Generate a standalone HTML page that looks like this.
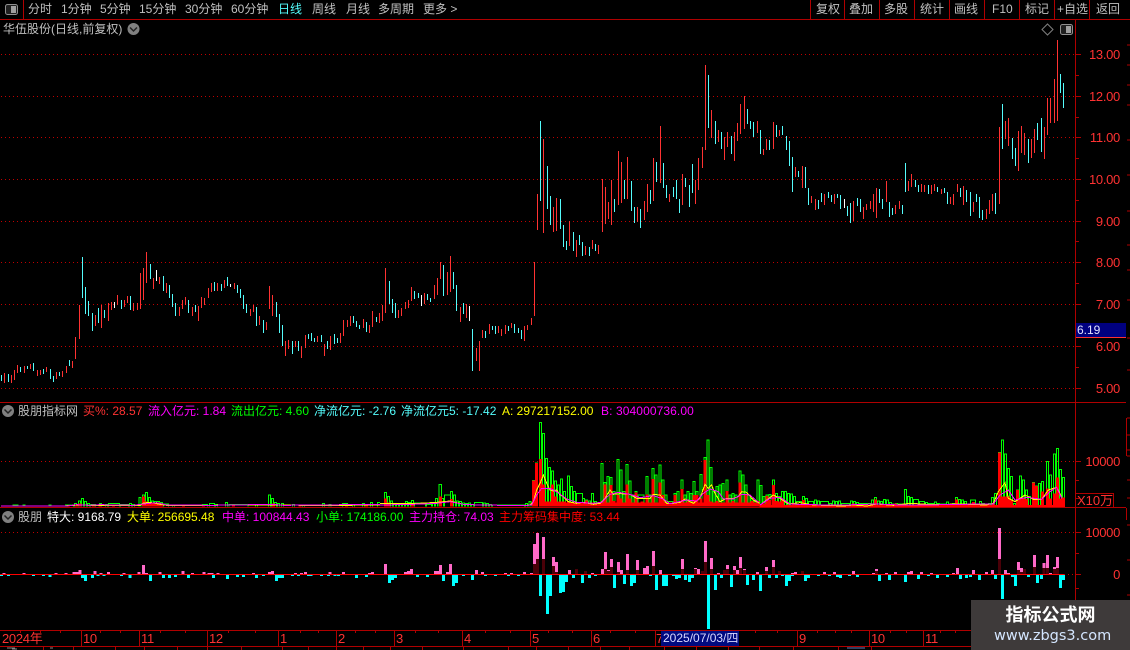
<!DOCTYPE html>
<html><head><meta charset="utf-8"><style>
html,body{margin:0;padding:0;background:#000}
#p{position:relative;width:1130px;height:650px;overflow:hidden;background:#000;font:12px/14px "Liberation Sans","WenQuanYi Zen Hei","Noto Sans CJK SC",sans-serif;color:#c0c0c0}
svg{position:absolute;left:0;top:0}
.t{position:absolute;white-space:nowrap}
.top{top:2px}.l1{top:404px}.l2{top:510px}
.pr{position:absolute;right:10px;color:#ff3232;font-size:13px;letter-spacing:-.3px;white-space:nowrap}
.ax{position:absolute;top:632px;color:#ff3232;font-size:13px;letter-spacing:-.3px}
.r{color:#ff3232}.m{color:#ff00ff}.g{color:#00ff00}.c{color:#54fcfc}.y{color:#ffff00}.w{color:#fff}
</style></head><body><div id="p">
<svg width="1130" height="650" viewBox="0 0 1130 650" shape-rendering="crispEdges" fill="none">
<!-- grid -->
<path stroke="#c00000" stroke-dasharray="1 3" d="M1 54.5H1075M1 96.5H1075M1 137.5H1075M1 179.5H1075M1 221.5H1075M1 262.5H1075M1 304.5H1075M1 346.5H1075M1 388.5H1075M1 461.5H1075M1 532.5H1075M1060 574.5H1075"/>
<!-- candles 0-300 -->
<g transform="translate(0 240) scale(.33333)" stroke-width="3">
<path stroke="#ff3232" d="M13 399V429M34 405V429M43 390V420M52 375V399M73 378V399M91 372V387M112 390V408M121 390V405M139 381V396M169 396V417M187 393V411M199 378V399M217 363V384M226 291V357M238 195V297M286 225V258M304 195V264M325 189V243M334 186V210M352 165V195M373 180V201M382 168V189M400 189V213M412 189V210M421 99V207M430 84V180M439 36V129M460 114V147M478 111V132M499 129V159M538 201V228M547 180V207M556 171V195M577 201V228M595 198V243M604 171V204M613 174V195M625 144V174M634 129V156M652 129V153M673 120V144M703 129V147M751 207V228M760 195V216M778 228V255M799 246V270M808 138V207M817 165V228M856 303V348M865 300V327M886 303V321"/>
<path stroke="#54fcfc" d="M4 405V423M25 402V426M61 381V396M82 378V387M100 369V393M130 387V402M151 387V417M160 408V426M178 396V408M208 360V378M247 51V174M256 141V222M265 183V228M277 219V273M295 204V249M313 210V234M364 180V207M391 168V210M451 72V117M490 108V153M508 135V174M517 162V201M526 189V228M565 180V219M586 195V216M643 126V153M664 132V153M682 111V138M712 135V159M721 147V174M730 165V207M739 192V219M769 201V258M790 240V279M829 186V231M838 222V279M847 255V318M877 303V342M895 303V333"/>
<path stroke="#fff" d="M343 186V204M469 90V123M691 132V141"/>
</g>
<!-- candles 300-620 -->
<g transform="translate(300 100) scale(.33333)" stroke-width="3">
<path stroke="#ff3232" d="M4 738V774M16 705V744M52 708V726M73 732V768M91 708V750M121 699V729M130 660V708M142 660V681M151 648V678M190 657V684M208 675V699M217 633V681M238 639V669M247 615V663M256 504V639M295 630V654M304 624V648M316 606V627M325 600V624M334 561V603M373 579V612M403 555V597M412 534V585M421 486V537M442 516V585M451 468V576M481 621V666M499 612V654M529 744V783M538 723V813M547 690V714M568 672V702M595 678V699M604 687V708M616 675V702M634 669V684M673 678V723M682 675V690M694 654V675M703 486V648M712 282V390M730 117V399M760 321V396M769 294V393M808 363V438M829 420V471M856 438V465M877 420V447M895 435V462M907 237V396M916 261V372M925 306V357M934 240V375M955 153V315"/>
<path stroke="#54fcfc" d="M25 702V717M34 699V723M43 714V726M64 705V726M82 723V747M103 702V732M112 714V729M160 648V669M169 663V681M178 675V687M199 666V696M229 651V666M268 543V612M277 597V639M286 609V654M343 573V597M355 579V594M382 582V600M391 594V606M430 495V588M460 516V567M469 555V633M490 609V642M517 687V813M556 693V714M577 678V690M586 678V702M625 678V693M643 672V699M655 684V699M664 690V717M721 63V303M742 198V327M751 288V375M781 297V387M790 375V441M799 423V450M820 396V453M838 405V435M847 426V468M868 441V468M886 432V453M943 297V336"/>
<path stroke="#fff" d="M364 585V618M508 618V663"/>
</g>
<!-- candles 620-870 -->
<g transform="translate(620 60) scale(.33333)" stroke-width="3">
<path stroke="#ff3232" d="M4 306V429M22 291V417M52 441V486M73 423V480M82 372V456M100 294V423M121 198V369M148 402V426M187 342V435M226 360V432M235 294V390M247 261V324M256 15V270M274 150V234M295 210V246M313 231V300M322 216V261M343 216V303M352 189V243M361 132V222M373 108V207M412 183V219M430 267V285M439 237V270M460 186V267M478 210V228M526 321V351M547 318V384M574 408V429M586 417V450M613 402V435M643 402V432M700 423V483M730 441V477M739 432V450"/>
<path stroke="#54fcfc" d="M13 360V417M34 363V453M43 441V489M61 447V504M91 390V432M109 306V366M130 309V384M139 375V414M160 381V411M169 360V417M178 417V459M196 354V381M208 375V441M217 312V399M265 45V204M286 183V252M304 216V267M334 228V282M382 147V192M391 183V207M400 186V231M421 210V282M448 240V270M469 195V231M487 198V225M499 228V270M508 243V318M517 291V396M535 333V351M556 321V384M565 384V435M595 420V447M604 399V426M625 396V414M634 405V426M652 402V414M661 405V447M682 438V468M691 429V489M712 414V438M721 417V456"/>
<path stroke="#fff" d="M673 417V444"/>
</g>
<!-- candles 870-1065 -->
<g transform="translate(870 30) scale(.33333)" stroke-width="3">
<path stroke="#ff3232" d="M1 513V537M10 492V546M19 474V564M49 453V516M76 525V552M88 513V537M115 453V483M124 432V471M154 462V486M163 465V486M184 465V492M193 462V483M214 477V492M241 501V522M250 492V525M262 462V486M280 468V525M310 516V546M349 537V567M358 510V552M367 492V543M388 291V522M406 273V327M415 264V348M445 303V423M454 288V369M463 309V375M484 327V384M493 297V369M523 291V387M532 204V315M541 204V279M553 147V279M562 30V273"/>
<path stroke="#54fcfc" d="M28 477V519M37 507V537M58 516V561M67 534V555M97 525V552M106 399V486M136 450V471M145 465V486M175 465V492M202 471V486M223 474V489M232 486V522M271 474V501M289 480V516M301 486V558M319 492V516M328 501V564M337 540V570M376 489V552M397 222V357M427 324V387M436 354V408M475 327V399M502 279V330M514 264V366M571 132V189M580 159V234"/>
</g>
<!-- volume panel left -->
<g transform="translate(0 395) scale(.33333)" stroke-width="3">
<path stroke="#00ff00" d="M39 334V330h15V334M69 334V330h6V334M147 334V330h6V334M197 334V330h24V334M223 334V325h6V334M235 334V318h6V334M244 334V310h6V334M253 334V320h6V334M262 334V325h6V334M271 334V328h15V334M298 334V325h6V334M316 334V328h6V334M325 334V325h33V334M361 334V328h24V334M388 334V325h6V334M397 334V328h6V334M417 334V308h6V334M427 334V300h6V334M436 334V292h6V334M445 334V308h6V334M454 334V318h6V334M463 334V320h15V334M481 334V322h6V334M490 334V327h15V334M517 334V330h6V334M607 334V328h15V334M628 334V325h15V334M646 334V328h6V334M677 334V322h6V334M687 334V328h57V334M767 334V328h6V334M805 334V300h6V334M814 334V310h6V334M823 334V322h6V334M832 334V325h6V334M845 334V325h6V334M877 334V328h6V334M907 334V330h6V334M967 334V325h6V334M987 334V328h6V334M1027 334V325h15V334M1057 334V328h6V334M1087 334V325h6V334M1112 334V322h6V334M1132 334V323h8"/>
<path stroke="#ff0000" stroke-width="9" d="M205 334V330M230 334V328M240 334V326M280 334V328M300 334V330M340 334V330M430 334V305M439 334V320M448 334V325M457 334V325M466 334V322M475 334V322M484 334V325M550 334V330M610 334V330M700 334V330M820 334V326M900 334V330M1040 334V328M1100 334V330"/>
<path stroke="#ffff00" d="M200 332L240 330L300 332L420 332L430 324L450 322L480 328L500 331L600 332L680 330L880 330L920 332L1140 330"/>
<path stroke="#ff00ff" d="M3 333L200 333L230 329L270 331L300 329L400 331L430 327L470 323L500 330L640 331L700 330L820 328L850 331L1140 328"/>
</g>
<!-- volume panel middle -->
<g transform="translate(380 395) scale(.33333)" stroke-width="3">
<path stroke="#00ff00" d="M13 334V292h6V334M22 334V305h6V334M31 334V318h6V334M40 334V325h6V334M49 334V328h6V334M58 334V325h6V334M67 334V328h6V334M76 334V320h6V334M85 334V322h6V334M94 334V316h6V334M103 334V324h33V334M139 334V328h15V334M157 334V326h6V334M166 334V310h6V334M177 334V268h7V334M184 334V310h6V334M193 334V300h18V334M211 334V290h6V334M220 334V300h6V334M229 334V318h6V334M238 334V320h6V334M247 334V324h6V334M256 334V326h6V334M265 334V324h6V334M274 334V328h6V334M283 334V322h24V334M310 334V324h6V334M319 334V326h6V334M328 334V328h6V334M337 334V330h96V334M437 334V325h6V334M447 334V320h6V334M457 334V256h6V334M466 334V204h6V334M478 334V82h6V334M487 334V115h6V334M496 334V190h6V334M505 334V218h6V334M514 334V228h6V334M523 334V258h6V334M532 334V270h6V334M541 334V252h6V334M550 334V290h6V334M562 334V243h6V334M571 334V275h6V334M580 334V290h6V334M589 334V295h18V334M607 334V310h6V334M616 334V315h6V334M625 334V318h6V334M634 334V295h6V334M643 334V320h6V334M652 334V322h6V334M663 334V205h6V334M672 334V262h6V334M681 334V245h6V334M690 334V248h6V334M699 334V290h6V334M711 334V193h6V334M720 334V225h6V334M729 334V290h6V334M738 334V208h6V334M747 334V258h6V334M756 334V300h6V334M765 334V290h6V334M774 334V300h18V334M798 334V245h6V334M807 334V300h6V334M816 334V220h6V334M825 334V240h6V334M837 334V210h6V334M846 334V255h6V334M855 334V300h6V334M864 334V320h15V334M882 334V295h6V334M891 334V290h6V334M903 334V255h6V334M912 334V300h6V334M921 334V290h6V334M930 334V295h6V334M939 334V260h6V334M948 334V290h6V334M960 334V238h6V334M972 334V187h6V334M981 334V135h6V334M990 334V217h6V334M999 334V290h6V334M1008 334V275h6V334M1017 334V270h6V334M1026 334V265h6V334M1038 334V255h6V334M1047 334V300h6V334M1056 334V295h6V334M1065 334V300h6V334M1077 334V228h6V334M1086 334V240h6V334M1095 334V270h6V334M1104 334V300h6V334M1113 334V310h6V334M1122 334V320h6V334M1131 334V255h6V334"/>
<path stroke="#ff0000" stroke-width="9" d="M16 334V310M25 334V322M97 334V326M181 334V305M214 334V312M460 334V256M469 334V204M481 334V192M490 334V268M499 334V320M508 334V320M517 334V268M526 334V305M535 334V320M544 334V320M553 334V320M565 334V320M583 334V322M601 334V322M619 334V316M637 334V322M666 334V322M675 334V268M693 334V270M702 334V318M714 334V300M723 334V310M741 334V268M750 334V310M768 334V292M786 334V320M801 334V298M819 334V252M840 334V262M849 334V300M867 334V322M885 334V300M906 334V282M924 334V320M942 334V300M951 334V300M963 334V310M975 334V195M984 334V300M993 334V320M1011 334V318M1041 334V288M1059 334V318M1080 334V262M1098 334V300M1116 334V318M1134 334V318"/>
<path fill="#ff0000" stroke="none" d="M495 323H1140V334H495Z"/>
<path stroke="#ffff00" d="M0 326L100 326L170 322L210 318L250 328L300 330L430 332L450 330L460 320L470 285L480 265L490 240L500 265L510 285L520 288L530 285L540 300L550 305L565 320L590 325L610 322L640 328L660 325L675 310L690 285L700 298L720 296L750 298L770 310L790 310L810 310L820 298L840 300L860 325L880 325L900 322L915 312L940 325L960 310L975 268L985 280L995 270L1005 295L1020 320L1040 310L1060 310L1075 305L1085 290L1100 292L1120 315L1140 325"/>
<path stroke="#ff00ff" d="M0 330L100 328L170 325L210 320L250 328L300 330L430 332L455 330L470 300L485 280L510 280L530 290L560 312L590 322L640 325L665 322L690 298L715 292L750 298L780 308L820 302L850 312L870 326L920 315L950 318L970 295L990 282L1015 290L1030 312L1060 312L1085 298L1110 300L1135 322"/>
</g>
<!-- volume panel right -->
<g transform="translate(760 400) scale(.33333)" stroke-width="3">
<path stroke="#00ff00" d="M0 321V256h6V321M9 321V290h6V321M18 321V285h6V321M27 321V283h6V321M37 321V240h6V321M46 321V280h6V321M55 321V290h6V321M64 321V275h6V321M73 321V275h6V321M82 321V280h6V321M91 321V282h6V321M100 321V290h6V321M109 321V305h15V321M127 321V290h6V321M136 321V295h6V321M145 321V305h15V321M163 321V300h6V321M172 321V303h6V321M181 321V305h24V321M208 321V310h6V321M217 321V303h6V321M226 321V305h6V321M235 321V303h6V321M244 321V310h24V321M271 321V303h6V321M280 321V305h6V321M289 321V308h6V321M298 321V310h33V321M334 321V300h6V321M343 321V292h6V321M352 321V303h6V321M361 321V305h6V321M370 321V298h6V321M379 321V300h6V321M388 321V308h6V321M397 321V312h6V321M406 321V310h6V321M415 321V312h15V321M433 321V268h6V321M442 321V290h6V321M451 321V292h6V321M460 321V298h15V321M478 321V305h15V321M496 321V308h6V321M505 321V310h15V321M523 321V306h6V321M532 321V310h6V321M541 321V312h15V321M559 321V306h6V321M568 321V312h6V321M577 321V310h6V321M586 321V292h6V321M595 321V298h6V321M604 321V300h6V321M613 321V305h6V321M622 321V312h6V321M631 321V300h15V321M649 321V312h6V321M658 321V305h6V321M667 321V310h6V321M676 321V312h6V321M685 321V310h6V321M694 321V292h6V321M703 321V280h6V321M715 321V158h6V321M724 321V120h6V321M733 321V162h6V321M742 321V205h6V321M751 321V230h6V321M760 321V310h6V321M769 321V270h6V321M778 321V228h6V321M787 321V240h6V321M796 321V270h6V321M805 321V290h6V321M818 321V248h6V321M827 321V258h6V321M836 321V250h6V321M845 321V245h6V321M859 321V184h6V321M868 321V225h6V321M880 321V162h6V321M889 321V145h6V321M898 321V208h6V321M907 321V232h6V321"/>
<path stroke="#ff0000" stroke-width="9" d="M3 321V312M12 321V310M21 321V288M30 321V300M40 321V255M49 321V303M58 321V305M67 321V300M100 321V314M130 321V300M160 321V314M220 321V314M280 321V310M346 321V298M406 321V310M450 321V314M520 321V314M589 321V298M640 321V306M700 321V312M718 321V158M727 321V290M736 321V290M745 321V290M754 321V300M772 321V270M781 321V295M790 321V295M799 321V297M808 321V315M821 321V248M830 321V258M839 321V315M848 321V275M862 321V265M871 321V295M883 321V280M892 321V232M901 321V295M910 321V293"/>
<path fill="#ff0000" stroke="none" d="M0 315H915V321H0Z"/>
<path stroke="#ffff00" d="M0 315L20 300L40 285L60 295L85 312L120 308L160 315L250 318L280 315L320 318L350 312L400 316L450 310L520 314L600 312L680 315L700 310L715 275L735 248L745 295L765 305L795 285L820 298L845 298L865 270L890 262L905 290"/>
<path stroke="#ff00ff" d="M0 315L30 295L60 292L90 312L140 314L250 315L350 312L420 315L500 315L600 313L700 312L720 285L745 270L765 300L800 292L845 298L870 275L890 262L905 295"/>
</g>
<!-- bottom panel bars -->
<g transform="translate(0 510) scale(.33333)" stroke-width="9">
<path stroke="#ff69c8" d="M12 193V189M72 193V189M168 193V189M198 193V189M222 193V186M231 193V186M240 193V180M285 193V183M303 193V189M326 193V186M372 193V189M417 193V186M430 193V165M440 193V189M480 193V186M549 193V183M578 193V189M612 193V186M627 193V189M636 193V189M654 193V189M760 193V189M808 193V186M817 193V183M886 193V189M904 193V189M916 193V186M990 193V186M1030 193V186M1108 193V189M1117 193V186M1156 193V162M1216 193V186M1225 193V183M1234 193V177M1306 193V183M1315 193V183M1322 193V165M1342 193V186M1351 193V162M1429 193V180M1447 193V186"/>
<path stroke="#00ffff" d="M4 195V198M25 195V198M100 195V198M130 195V198M150 195V201M247 195V204M256 195V213M277 195V204M294 195V198M312 195V198M364 195V198M390 195V204M451 195V213M490 195V204M508 195V204M526 195V201M565 195V204M640 195V204M682 195V207M712 195V201M730 195V201M770 195V204M790 195V198M829 195V213M838 195V204M847 195V204M877 195V198M895 195V198M925 195V198M933 195V198M965 195V198M985 195V198M1005 195V198M1015 195V198M1069 195V204M1100 195V201M1168 195V219M1177 195V210M1186 195V204M1252 195V201M1282 195V201M1330 195V213M1360 195V228M1369 195V219M1390 195V198M1417 195V210M1456 195V198M1486 195V198"/>
</g>
<g transform="translate(500 510) scale(.33333)" stroke-width="9">
<path stroke="#ff69c8" d="M17 193V189M35 193V189M73 193V186M94 193V189M103 193V102M112 193V69M130 193V81M160 193V141M169 193V156M208 193V180M277 193V189M307 193V177M316 193V126M325 193V180M334 193V147M355 193V156M364 193V180M382 193V132M412 193V150M433 193V174M442 193V168M460 193V123M481 193V180M547 193V147M586 193V174M595 193V177M616 193V93M634 193V144M655 193V189M682 193V165M703 193V168M712 193V180M721 193V141M733 193V177M772 193V186M799 193V171M820 193V150M877 193V189M886 193V186"/>
<path stroke="#4a0008" d="M103 193V162M112 193V147M130 193V147M160 193V168M169 193V186M229 193V177M256 193V183M316 193V177M325 193V183M334 193V171M355 193V186M382 193V180M412 193V180M460 193V168M547 193V177M586 193V177M607 193V183M616 193V156M634 193V177M673 193V180M682 193V177M703 193V180M721 193V174M733 193V180M799 193V183M820 193V171M838 193V183M907 193V183"/>
<path stroke="#00ffff" d="M25 195V198M55 195V198M121 195V258M142 195V312M151 195V258M181 195V249M190 195V246M199 195V216M220 195V204M247 195V219M268 195V204M286 195V198M343 195V234M373 195V222M394 195V228M403 195V219M451 195V198M469 195V240M490 195V228M499 195V228M520 195V198M529 195V207M538 195V204M556 195V210M568 195V216M577 195V204M625 195V357M646 195V240M664 195V204M694 195V231M742 195V225M760 195V210M781 195V243M808 195V204M829 195V204M847 195V198M859 195V228M868 195V213M877 195V198M916 195V213M925 195V204M955 195V198"/>
</g>
<g transform="translate(820 510) scale(.33333)" stroke-width="9">
<path stroke="#ff69c8" d="M13 193V186M43 193V186M100 193V183M160 193V189M169 193V177M199 193V189M226 193V186M265 193V186M274 193V183M304 193V186M334 193V189M400 193V189M412 193V174M460 193V180M499 193V186M517 193V180M538 193V54M556 193V180M565 193V189M595 193V156M604 193V174M643 193V135M672 193V159M682 193V135M691 193V189M703 193V171M712 193V141"/>
<path stroke="#4a0008" d="M169 193V183M538 193V147M595 193V180M604 193V186M613 193V177M643 193V171M672 193V174M682 193V174M703 193V177M712 193V174"/>
<path stroke="#00ffff" d="M28 195V198M52 195V201M61 195V204M88 195V198M112 195V201M178 195V213M208 195V210M256 195V216M295 195V207M325 195V198M352 195V204M382 195V201M421 195V207M439 195V204M451 195V201M478 195V210M526 195V207M547 195V267M577 195V201M586 195V228M625 195V201M652 195V219M664 195V207M721 195V234M730 195V210"/>
</g>
<path stroke="#ff0000" d="M0 574.5H1064"/>
<!-- frame lines -->
<path stroke="#b00000" d="M0 19.5H1130M23.5 0V19M810.5 0V19M844.5 0V19M879.5 0V19M914.5 0V19M949.5 0V19M984.5 0V19M1019.5 0V19M1054.5 0V19M1089.5 0V19M0 402.5H1126M0 507.5H1126M0 630.5H1130M0 646.5H1130M1075.5 19V630M1126.5 508V520M1076 493.5H1113.5V507"/>
<!-- axis ticks -->
<path stroke="#b00000" d="M1076 54.5h5M1076 96.5h5M1076 137.5h5M1076 179.5h5M1076 221.5h5M1076 262.5h5M1076 304.5h5M1076 346.5h5M1076 388.5h5M1076 75.5h3M1076 117.5h3M1076 158.5h3M1076 200.5h3M1076 241.5h3M1076 283.5h3M1076 325.5h3M1076 367.5h3M1076 461.5h5M1076 480.5h3M1076 498.5h3M1076 532.5h5M1076 574.5h5M1076 553.5h3M1076 588.5h3"/>
<path stroke="#b00000" d="M1126.5 418V456M1127 45h3M1127 65h3M1127 85h3M1127 105h3M1127 140h3M1127 175h3M1127 211h3M1127 245h3M1127 270h3M1127 300h3M1127 338h3M1127 370h3M1127 418h3M1127 435h3M1127 450h3M1127 456h3M1127 480h3M1127 498h3M1127 525h3M1127 560h3M1127 595h3"/>
<!-- x axis -->
<path stroke="#b00000" d="M81.5 630V646M139.5 630V646M207.5 630V646M278.5 630V646M336.5 630V646M394.5 630V646M462.5 630V646M530.5 630V646M591.5 630V646M655.5 630V646M797.5 630V646M869.5 630V646M923.5 630V646"/>
<path stroke="#b00000" d="M20.5 630v3M40.5 630v3M60.5 630v3M100.5 630v3M120.5 630v3M160.5 630v3M185.5 630v3M228.5 630v3M255.5 630v3M300.5 630v3M318.5 630v3M355.5 630v3M375.5 630v3M415.5 630v3M438.5 630v3M485.5 630v3M510.5 630v3M548.5 630v3M572.5 630v3M610.5 630v3M635.5 630v3M677.5 630v3M700.5 630v3M755.5 630v3M777.5 630v3M817.5 630v3M835.5 630v3M851.5 630v3M890.5 630v3M906.5 630v3M940.5 630v3M955.5 630v3"/>
<path stroke="#b00000" d="M43.5 647v3M73.5 647v3M115.5 647v3M144.5 647v3M177.5 647v3M207.5 647v3M241.5 647v3M282.5 647v3M308.5 647v3M336.5 647v3M363.5 647v3M390.5 647v3M422.5 647v3M463.5 647v3M508.5 647v3M536.5 647v3M568.5 647v3M600.5 647v3M629.5 647v3M664.5 647v3M696.5 647v3M728.5 647v3M759.5 647v3M793.5 647v3M838.5 647v3M871.5 647v3"/>
<path stroke="#888" d="M7 648h8M12 649h5M50 648h3"/>
<path stroke="#6080c0" d="M847 648h18"/>
<!-- icons -->
<g shape-rendering="auto">
<rect x="5.5" y="4.5" width="12" height="10" rx="2" stroke="#909090" fill="#202020"/><rect x="11" y="6" width="5" height="7" fill="#a0a0a0"/>
<rect x="1060.5" y="24.5" width="12" height="10" rx="2" stroke="#909090" fill="#202020"/><rect x="1066" y="26" width="5" height="7" fill="#a0a0a0"/>
<path d="M1047.5 24L1053 29.5L1047.5 35L1042 29.5Z" stroke="#808080"/>
<circle cx="133.5" cy="29" r="6" fill="#808080"/><path d="M130 27.5l3.500 3.500l3.500-3.500" stroke="#222" stroke-width="1.500"/>
<circle cx="8" cy="411" r="6" fill="#808080"/><path d="M4.500 409.500l3.500 3.500l3.500-3.500" stroke="#222" stroke-width="1.500"/>
<circle cx="8" cy="517" r="6" fill="#808080"/><path d="M4.500 515.500l3.500 3.500l3.500-3.500" stroke="#222" stroke-width="1.500"/>
</g>
</svg>
<!-- toolbar -->
<span class="t top" style="left:28px">分时</span>
<span class="t top" style="left:61px">1分钟</span>
<span class="t top" style="left:100px">5分钟</span>
<span class="t top" style="left:139px">15分钟</span>
<span class="t top" style="left:185px">30分钟</span>
<span class="t top" style="left:231px">60分钟</span>
<span class="t top c" style="left:278px">日线</span>
<span class="t top" style="left:312px">周线</span>
<span class="t top" style="left:346px">月线</span>
<span class="t top" style="left:378px">多周期</span>
<span class="t top" style="left:423px">更多 &gt;</span>
<span class="t top" style="left:816px">复权</span>
<span class="t top" style="left:849px">叠加</span>
<span class="t top" style="left:884px">多股</span>
<span class="t top" style="left:920px">统计</span>
<span class="t top" style="left:954px">画线</span>
<span class="t top" style="left:992px">F10</span>
<span class="t top" style="left:1025px">标记</span>
<span class="t top" style="left:1057px">+自选</span>
<span class="t top" style="left:1096px">返回</span>
<span class="t" style="left:3px;top:22px">华伍股份(日线,前复权)</span>
<!-- legends -->
<span class="t l1" style="left:18px">股朋指标网</span>
<span class="t l1 r" style="left:83px">买%: 28.57</span>
<span class="t l1 m" style="left:148px">流入亿元: 1.84</span>
<span class="t l1 g" style="left:231px">流出亿元: 4.60</span>
<span class="t l1 c" style="left:314px">净流亿元: -2.76</span>
<span class="t l1 c" style="left:401px">净流亿元5: -17.42</span>
<span class="t l1 y" style="left:502px">A: 297217152.00</span>
<span class="t l1 m" style="left:601px;letter-spacing:.1px">B: 304000736.00</span>
<span class="t l2" style="left:18px">股朋</span>
<span class="t l2 w" style="left:47px">特大: 9168.79</span>
<span class="t l2 y" style="left:127px">大单: 256695.48</span>
<span class="t l2 m" style="left:222px">中单: 100844.43</span>
<span class="t l2 g" style="left:316px">小单: 174186.00</span>
<span class="t l2 m" style="left:409px">主力持仓: 74.03</span>
<span class="t l2" style="left:499px;color:#ff0000">主力筹码集中度: 53.44</span>
<!-- price axis -->
<span class="pr" style="top:48px">13.00</span>
<span class="pr" style="top:90px">12.00</span>
<span class="pr" style="top:131px">11.00</span>
<span class="pr" style="top:173px">10.00</span>
<span class="pr" style="top:215px">9.00</span>
<span class="pr" style="top:256px">8.00</span>
<span class="pr" style="top:298px">7.00</span>
<span class="pr" style="top:340px">6.00</span>
<span class="pr" style="top:382px">5.00</span>
<span class="pr" style="top:455px">10000</span>
<span class="pr" style="top:526px">10000</span>
<span class="pr" style="top:568px">0</span>
<div class="t" style="left:1076px;top:323px;width:50px;height:14px;background:#000080;color:#e0e0ff;font-size:12px;line-height:14px;border-bottom:1px solid #ff3232;text-indent:1px">6.19</div>
<span class="t r" style="left:1077px;top:494px;font-size:13px">X10万</span>
<!-- x axis labels -->
<span class="ax" style="left:2px">2024年</span>
<span class="ax" style="left:83px">10</span>
<span class="ax" style="left:141px">11</span>
<span class="ax" style="left:209px">12</span>
<span class="ax" style="left:280px">1</span>
<span class="ax" style="left:338px">2</span>
<span class="ax" style="left:396px">3</span>
<span class="ax" style="left:464px">4</span>
<span class="ax" style="left:532px">5</span>
<span class="ax" style="left:593px">6</span>
<span class="ax" style="left:656px">7</span>
<span class="ax" style="left:799px">9</span>
<span class="ax" style="left:871px">10</span>
<span class="ax" style="left:925px">11</span>
<div class="t" style="left:661px;top:631px;width:78px;height:15px;background:#000a80;color:#d8d8ff;font-size:12px;line-height:15px;text-indent:2px;overflow:hidden">2025/07/03/四</div>
<!-- watermark -->
<div class="t" style="left:971px;top:600px;width:159px;height:50px;background:#3e3a3a"></div>
<div class="t" style="left:971px;top:605px;width:159px;text-align:center;color:#fff;font-weight:bold;font-size:18px;line-height:20px">指标公式网</div>
<div class="t" style="left:994px;top:628px;color:#d4e6ff;font:14.500px/16px 'DejaVu Sans',sans-serif">www.zbgs3.com</div>
</div></body></html>
